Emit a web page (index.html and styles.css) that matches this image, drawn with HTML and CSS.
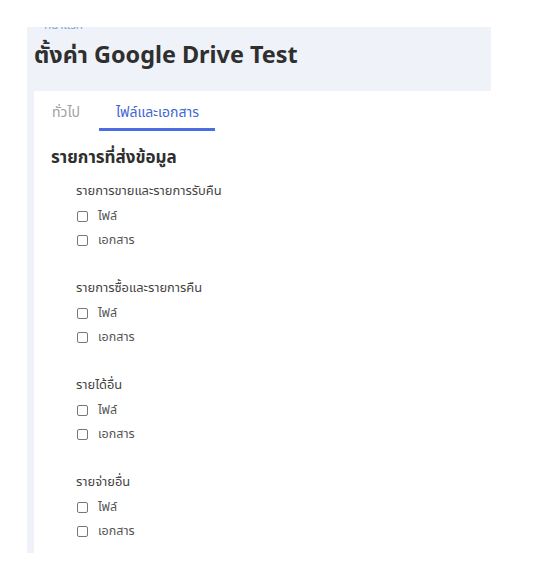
FILE: index.html
```html
<!DOCTYPE html>
<html>
<head>
    <title>ตั้งค่า Google Drive Test</title>
    <meta name="viewport" content="width=device-width, initial-scale=1.0">
    <link rel="stylesheet" href="styles.css">
</head>
<body>

    <div class="page">
        <div class="crumb">&lt; หน้าแรก</div>
        <h1 class="title">ตั้งค่า Google Drive Test</h1>

        <div class="card">
            <div class="tabs">
                <div class="tab">ทั่วไป</div>
                <div class="tab active">ไฟล์และเอกสาร</div>
            </div>

            <div class="content">
                <h2 class="section-title">รายการที่ส่งข้อมูล</h2>

                <div class="group">
                    <div class="group-title">รายการขายและรายการรับคืน</div>
                    <label class="check"><span class="box"></span>ไฟล์</label>
                    <label class="check"><span class="box"></span>เอกสาร</label>
                </div>

                <div class="group">
                    <div class="group-title">รายการซื้อและรายการคืน</div>
                    <label class="check"><span class="box"></span>ไฟล์</label>
                    <label class="check"><span class="box"></span>เอกสาร</label>
                </div>

                <div class="group">
                    <div class="group-title">รายได้อื่น</div>
                    <label class="check"><span class="box"></span>ไฟล์</label>
                    <label class="check"><span class="box"></span>เอกสาร</label>
                </div>

                <div class="group">
                    <div class="group-title">รายจ่ายอื่น</div>
                    <label class="check"><span class="box"></span>ไฟล์</label>
                    <label class="check"><span class="box"></span>เอกสาร</label>
                </div>
            </div>
        </div>
    </div>

</body>
</html>
```

FILE: styles.css
```css
* {
    margin: 0;
    padding: 0;
    box-sizing: border-box;
}

body {
    background: #ffffff;
    font-family: "Noto Sans", "Noto Sans Thai", sans-serif;
    color: #333333;
}

.page {
    margin: 27px 0 0 27px;
    width: 464px;
    height: 526px;
    background: #eff2f8;
    padding-left: 7px;
    overflow: hidden;
}

.crumb {
    font-size: 12px;
    line-height: 14px;
    margin-top: -9px;
    color: #8aa6e6;
}

.title {
    font-size: 23.4px;
    font-weight: 700;
    line-height: 32px;
    margin-top: 6px;
    color: #2f2f2f;
}

.card {
    margin-top: 21px;
    background: #ffffff;
    height: 100%;
}

.tabs {
    display: flex;
    padding-left: 18px;
    padding-top: 12px;
}

.tab {
    font-size: 14px;
    line-height: 18px;
    color: #a0a0a0;
    padding: 0 0 7px 0;
    margin-right: 19px;
    border-bottom: 3px solid transparent;
}

.tab.active {
    color: #4466d6;
    padding: 0 16px 7px 17px;
    border-bottom-color: #4a6de0;
}

.content {
    padding: 15px 0 0 17px;
}

.section-title {
    font-size: 17px;
    font-weight: 700;
    line-height: 22px;
    color: #2f2f2f;
    margin-bottom: 13px;
}

.group {
    padding-left: 25px;
    margin-bottom: 26px;
}

.group-title {
    font-size: 12.9px;
    line-height: 18px;
    color: #444444;
    margin-bottom: 5px;
}

.check {
    display: flex;
    align-items: center;
    gap: 10px;
    font-size: 12.5px;
    line-height: 24px;
    color: #555555;
}

.box {
    width: 11px;
    height: 11px;
    border: 1px solid #777777;
    border-radius: 2px;
    margin-left: 1px;
}
```
